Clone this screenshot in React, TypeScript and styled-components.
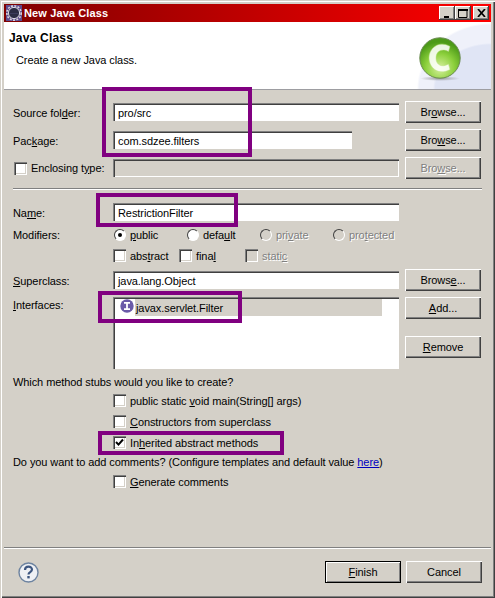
import styled, { createGlobalStyle } from 'styled-components';

/* —— tokens —— */
const face = '#d4d0c8';
const shadow = '#808080';
const dark = '#404040';
const purple = '#800080';
const disabled = '#808080';

const Global = createGlobalStyle`
  html, body { margin: 0; padding: 0; background: ${face}; }
  body { font-family: "Liberation Sans", Arial, sans-serif; font-size: 11px; color: #000; }
  u { text-underline-offset: 1px; }
`;

/* —— window frame —— */
const Window = styled.div`
  box-sizing: border-box;
  position: relative;
  width: 495px;
  height: 598px;
  background: ${face};
  padding: 4px;
  display: flex;
  flex-direction: column;
  letter-spacing: -0.08px;
  box-shadow: inset 1px 1px 0 ${face}, inset 2px 2px 0 #fff, inset -1px -1px 0 ${dark}, inset -2px -2px 0 ${shadow};
`;

const TitleBar = styled.div`
  height: 18px;
  flex: none;
  display: flex;
  align-items: center;
  padding: 0 2px;
  gap: 2px;
  background: linear-gradient(90deg, #800000, #ff0000);
  color: #fff;
  font-weight: 700;
  letter-spacing: 0.12px;
`;

const TitleText = styled.span`
  flex: 1;
`;

const WinButtons = styled.div`
  display: flex;
`;

const WinBtn = styled.div<{ $gap?: number }>`
  box-sizing: border-box;
  width: 16px;
  height: 14px;
  margin-left: ${p => p.$gap ?? 0}px;
  background: ${face};
  box-shadow: inset -1px -1px 0 ${dark}, inset 1px 1px 0 #fff, inset -2px -2px 0 ${shadow};
  display: flex;
  align-items: center;
  justify-content: center;
`;

/* —— banner —— */
const Banner = styled.div`
  box-sizing: border-box;
  height: 68px;
  flex: none;
  display: flex;
  justify-content: space-between;
  padding: 15px 29px 0 5px;
  border-bottom: 1px solid #9d9da1;
  background:
    radial-gradient(ellipse 58px 46px at 100% 100%, #e0e5f5 0 96%, transparent 100%),
    radial-gradient(ellipse 74px 66px at 100% 100%, #eff1fa 0 97%, transparent 100%),
    #fff;
`;

const BannerText = styled.div`
  margin-top: -9px;
`;

const BannerTitle = styled.div`
  font-weight: 700;
  font-size: 12px;
  letter-spacing: 0.2px;
  line-height: 14px;
  margin-top: 3px;
`;

const BannerSub = styled.div`
  margin: 8px 0 0 7px;
  line-height: 14px;
`;

/* —— form body —— */
const Body = styled.div`
  flex: 1;
  display: flex;
  flex-direction: column;
  padding: 0 9px;
`;

const FormGrid = styled.div<{ $top?: number; $rowGap?: number }>`
  display: grid;
  grid-template-columns: 94px 286px 76px;
  column-gap: 6px;
  row-gap: ${p => p.$rowGap ?? 0}px;
  margin-top: ${p => p.$top ?? 0}px;
  align-items: center;
`;

const Sep = styled.div<{ $top: number; $bottom: number }>`
  height: 0;
  margin: ${p => p.$top}px 0 ${p => p.$bottom}px;
  border-top: 1px solid ${shadow};
  border-bottom: 1px solid #fff;
`;

const Label = styled.div`
  white-space: nowrap;
  line-height: 14px;
  padding-top: 1px;
`;

const Input = styled.div<{ $w?: number; $off?: boolean }>`
  box-sizing: border-box;
  height: 18px;
  width: ${p => (p.$w ? `${p.$w}px` : '100%')};
  padding: 1px 5px 0;
  background: ${p => (p.$off ? face : '#fff')};
  box-shadow: inset 1px 1px 0 ${shadow}, inset 2px 2px 0 ${dark}, inset -1px -1px 0 #fff;
  display: flex;
  align-items: center;
`;

const Btn = styled.div<{ $off?: boolean; $default?: boolean }>`
  box-sizing: border-box;
  height: 22px;
  width: 76px;
  display: flex;
  align-items: center;
  justify-content: center;
  background: ${face};
  color: ${p => (p.$off ? disabled : '#000')};
  text-shadow: ${p => (p.$off ? '1px 1px 0 #fff' : 'none')};
  box-shadow: ${p =>
    p.$default
      ? `inset 0 0 0 1px #000, inset 2px 2px 0 #fff, inset -2px -2px 0 ${shadow}`
      : `inset 1px 1px 0 #fff, inset -1px -1px 0 ${dark}, inset -2px -2px 0 ${shadow}`};
`;

const Row = styled.div<{ $indent?: number; $h: number; $top?: number }>`
  display: flex;
  align-items: center;
  height: ${p => p.$h}px;
  margin-top: ${p => p.$top ?? 0}px;
  padding-left: ${p => p.$indent ?? 0}px;
`;

const Option = styled.div<{ $w?: number; $off?: boolean }>`
  display: flex;
  align-items: center;
  gap: 4px;
  width: ${p => (p.$w ? `${p.$w}px` : 'auto')};
  color: ${p => (p.$off ? disabled : '#000')};
  text-shadow: ${p => (p.$off ? '1px 1px 0 #fff' : 'none')};
  white-space: nowrap;
`;

const Check = styled.span<{ $off?: boolean; $inset?: number }>`
  flex: none;
  box-sizing: border-box;
  width: 13px;
  height: 13px;
  margin-left: ${p => p.$inset ?? 0}px;
  background: ${p => (p.$off ? face : '#fff')};
  box-shadow: inset 1px 1px 0 ${shadow}, inset 2px 2px 0 ${dark}, inset -1px -1px 0 #fff, inset -2px -2px 0 ${face};
  display: flex;
  align-items: center;
  justify-content: center;
`;

const Radio = styled.span<{ $off?: boolean; $on?: boolean }>`
  flex: none;
  box-sizing: border-box;
  width: 12px;
  height: 12px;
  margin: 0 0 0 1px;
  border-radius: 50%;
  background: ${p => (p.$off ? face : '#fff')};
  border: 1px solid;
  border-color: ${dark} #fff #fff ${dark};
  display: flex;
  align-items: center;
  justify-content: center;

  &::after {
    content: '';
    display: ${p => (p.$on ? 'block' : 'none')};
    width: 4px;
    height: 4px;
    border-radius: 50%;
    background: #000;
  }
`;

const ListBox = styled.div`
  box-sizing: border-box;
  height: 72px;
  background: #fff;
  padding: 2px;
  box-shadow: inset 1px 1px 0 ${shadow}, inset 2px 2px 0 ${dark}, inset -1px -1px 0 #fff;
`;

const ListItem = styled.div`
  display: flex;
  width: 267px;
  height: 17px;
  padding-left: 5px;
  box-sizing: border-box;
`;

const ListItemText = styled.div`
  flex: 1;
  margin-left: 1px;
  padding: 1px 0 0 1px;
  background: ${face};
  display: flex;
  align-items: center;
`;

const SideButtons = styled.div`
  display: flex;
  flex-direction: column;
  align-self: start;
  gap: 17px;
`;

const TopLabel = styled(Label)`
  align-self: start;
`;

const HereLink = styled.a`
  color: #0000c0;
  text-decoration: underline;
`;

const Footer = styled.div`
  display: flex;
  align-items: center;
  justify-content: space-between;
  height: 22px;
  margin-bottom: 11px;
  padding: 0 9px 0 14px;
`;

const FooterButtons = styled.div`
  display: flex;
  gap: 5px;
`;

/* —— purple annotations drawn over the screenshot —— */
const Mark = styled.div<{ $x: number; $y: number; $w: number; $h: number }>`
  position: absolute;
  box-sizing: border-box;
  left: ${p => p.$x}px;
  top: ${p => p.$y}px;
  width: ${p => p.$w}px;
  height: ${p => p.$h}px;
  border: 4px solid ${purple};
  pointer-events: none;
`;

/* —— drawings —— */
const EclipseIcon = () => (
  <svg width="16" height="16" viewBox="0 0 16 16">
    <rect width="16" height="16" fill="#5d4a8c" />
    <circle cx="8" cy="8" r="7.2" fill="none" stroke="#d8d4d8" strokeWidth="1.6" strokeDasharray="2 1.4" />
    <circle cx="8" cy="8" r="5.6" fill="#2c2c44" stroke="#d8d8e0" />
    <path d="M3.5 8.5h9" stroke="#3c3c5c" />
  </svg>
);

const ClassIcon = () => (
  <svg width="44" height="46" viewBox="0 0 44 46">
    <defs>
      <radialGradient id="ball" cx="50%" cy="75%" r="65%">
        <stop offset="0" stopColor="#d8f0a0" />
        <stop offset="0.55" stopColor="#8cd03c" />
        <stop offset="1" stopColor="#4c9a18" />
      </radialGradient>
      <radialGradient id="drop" cx="50%" cy="50%" r="50%">
        <stop offset="0" stopColor="#9a9aa0" />
        <stop offset="1" stopColor="#9a9aa0" stopOpacity="0" />
      </radialGradient>
    </defs>
    <ellipse cx="22" cy="41.5" rx="20" ry="2.5" fill="url(#drop)" />
    <circle cx="22" cy="21" r="20.2" fill="url(#ball)" stroke="#6a8a50" />
    <path d="M32 9.5C21 3 11 11 11 21s10 18 21 11.5l-1.5-5.5C24 31 18 28 18 21s6-10 12.5-6.5z" fill="#fff" fillOpacity="0.88" stroke="#b8e080" strokeWidth="0.5" />
  </svg>
);

const InterfaceIcon = () => (
  <svg width="14" height="14" viewBox="0 0 14 14">
    <circle cx="7" cy="7" r="6.7" fill="#6a5aa8" />
    <path d="M4 3.8h6M4 10.2h6M7 3.8v6.4" stroke="#fff" strokeWidth="1.8" />
  </svg>
);

const HelpIcon = () => (
  <svg width="21" height="21" viewBox="0 0 21 21">
    <circle cx="10.5" cy="10.5" r="9.5" fill="#eef0f4" stroke="#6d83a0" strokeWidth="1.4" />
    <path d="M7 8c0-4.5 7-4.5 7-.4 0 2.6-3.5 2.4-3.5 4.9" fill="none" stroke="#3d5680" strokeWidth="2.2" />
    <rect x="9.3" y="14" width="2.4" height="2.4" fill="#3d5680" />
  </svg>
);

const Tick = () => (
  <svg width="9" height="9" viewBox="0 0 9 9">
    <path d="M1 4l2.5 2.6L8 1.5" fill="none" stroke="#000" strokeWidth="2" />
  </svg>
);

/* ========================================================= */
export default function App() {
  return (
    <Window>
      <Global />
      <TitleBar>
        <EclipseIcon />
        <TitleText>New Java Class</TitleText>
        <WinButtons>
          <WinBtn>
            <svg width="8" height="9" viewBox="0 0 8 9"><path d="M1 8h5" stroke="#000" strokeWidth="2" /></svg>
          </WinBtn>
          <WinBtn>
            <svg width="10" height="9" viewBox="0 0 10 9"><path d="M.5 1.5h8.5v7H.5z" fill="none" stroke="#000" /><path d="M0 1h10" stroke="#000" strokeWidth="2" /></svg>
          </WinBtn>
          <WinBtn $gap={2}>
            <svg width="9" height="8" viewBox="0 0 9 8"><path d="M1 0l7 8M8 0L1 8" stroke="#000" strokeWidth="1.7" /></svg>
          </WinBtn>
        </WinButtons>
      </TitleBar>

      <Banner>
        <BannerText>
          <BannerTitle>Java Class</BannerTitle>
          <BannerSub>Create a new Java class.</BannerSub>
        </BannerText>
        <ClassIcon />
      </Banner>

      <Body>
        <FormGrid $top={11} $rowGap={6}>
          <Label>Source fol<u>d</u>er:</Label>
          <Input>pro/src</Input>
          <Btn>Br<u>o</u>wse...</Btn>

          <Label>Pac<u>k</u>age:</Label>
          <Input $w={239}>com.sdzee.filters</Input>
          <Btn>Bro<u>w</u>se...</Btn>

          <Option>
            <Check $inset={1} />
            <span>Enclosing t<u>y</u>pe:</span>
          </Option>
          <Input $off />
          <Btn $off>Bro<u>w</u>se...</Btn>
        </FormGrid>

        <Sep $top={9} $bottom={13} />

        <FormGrid>
          <Label>Na<u>m</u>e:</Label>
          <Input>RestrictionFilter</Input>
          <span />
        </FormGrid>

        <FormGrid $top={3}>
          <Label>Modifiers:</Label>
          <Row $h={21}>
            <Option $w={73}><Radio $on /><span><u>p</u>ublic</span></Option>
            <Option $w={73}><Radio /><span>defa<u>u</u>lt</span></Option>
            <Option $w={73} $off><Radio $off /><span>pri<u>v</u>ate</span></Option>
            <Option $off><Radio $off /><span>pro<u>t</u>ected</span></Option>
          </Row>
          <span />
        </FormGrid>

        <FormGrid>
          <span />
          <Row $h={21}>
            <Option $w={66}><Check /><span>abs<u>t</u>ract</span></Option>
            <Option $w={66}><Check /><span>fina<u>l</u></span></Option>
            <Option $off><Check $off /><span>stati<u>c</u></span></Option>
          </Row>
          <span />
        </FormGrid>

        <FormGrid $top={3} $rowGap={6}>
          <Label><u>S</u>uperclass:</Label>
          <Input>java.lang.Object</Input>
          <Btn>Brows<u>e</u>...</Btn>

          <TopLabel><u>I</u>nterfaces:</TopLabel>
          <ListBox>
            <ListItem>
              <InterfaceIcon />
              <ListItemText>javax.servlet.Filter</ListItemText>
            </ListItem>
          </ListBox>
          <SideButtons>
            <Btn><u>A</u>dd...</Btn>
            <Btn><u>R</u>emove</Btn>
          </SideButtons>
        </FormGrid>

        <Row $h={14} $top={6}>Which method stubs would you like to create?</Row>
        <Row $h={21} $indent={100} $top={1}>
          <Option><Check /><span>public static <u>v</u>oid main(String[] args)</span></Option>
        </Row>
        <Row $h={21} $indent={100}>
          <Option><Check /><span><u>C</u>onstructors from superclass</span></Option>
        </Row>
        <Row $h={21} $indent={100}>
          <Option><Check><Tick /></Check><span>In<u>h</u>erited abstract methods</span></Option>
        </Row>
        <Row $h={18}>
          <span>Do you want to add comments? (Configure templates and default value <HereLink>here</HereLink>)</span>
        </Row>
        <Row $h={21} $indent={100}>
          <Option><Check /><span><u>G</u>enerate comments</span></Option>
        </Row>
      </Body>

      <Sep $top={0} $bottom={12} />

      <Footer>
        <HelpIcon />
        <FooterButtons>
          <Btn $default><u>F</u>inish</Btn>
          <Btn>Cancel</Btn>
        </FooterButtons>
      </Footer>

      <Mark $x={102} $y={87} $w={150} $h={70} />
      <Mark $x={96} $y={193} $w={142} $h={34} />
      <Mark $x={98} $y={291} $w={144} $h={32} />
      <Mark $x={98} $y={431} $w={186} $h={24} />
    </Window>
  );
}
